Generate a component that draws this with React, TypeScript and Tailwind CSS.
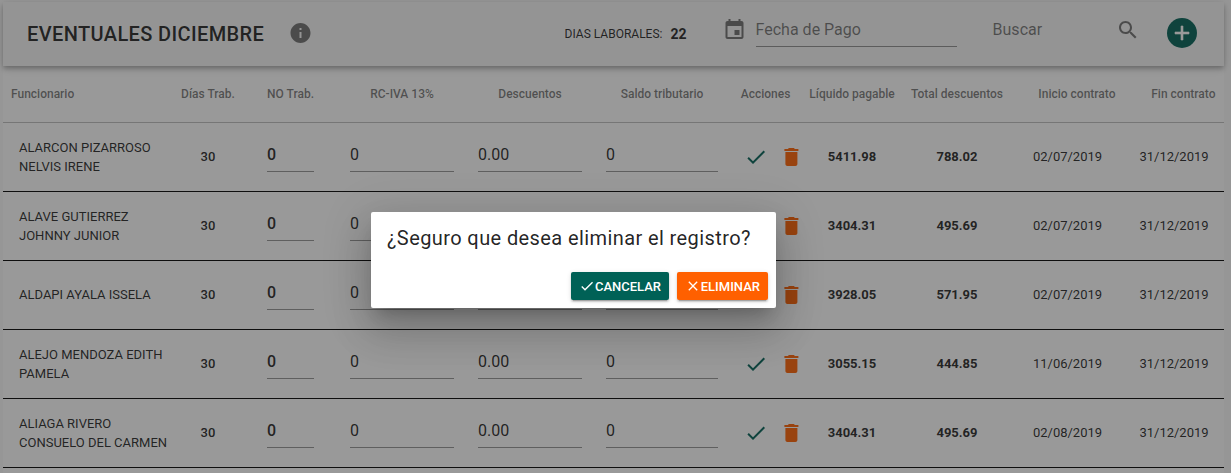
import React from "react";

const PATHS = {
  info: "M12 2C6.48 2 2 6.48 2 12s4.48 10 10 10 10-4.48 10-10S17.52 2 12 2zm1 15h-2v-6h2v6zm0-8h-2V7h2v2z",
  event: "M17 12h-5v5h5v-5zM16 1v2H8V1H6v2H5c-1.11 0-1.99.9-1.99 2L3 19c0 1.1.89 2 2 2h14c1.1 0 2-.9 2-2V5c0-1.1-.9-2-2-2h-1V1h-2zm3 18H5V8h14v11z",
  search:
    "M15.5 14h-.79l-.28-.27C15.41 12.59 16 11.11 16 9.5 16 5.91 13.09 3 9.5 3S3 5.91 3 9.5 5.91 16 9.5 16c1.61 0 3.09-.59 4.23-1.57l.27.28v.79l5 4.99L20.49 19l-4.99-5zm-6 0C7.01 14 5 11.99 5 9.5S7.01 5 9.5 5 14 7.01 14 9.5 11.99 14 9.5 14z",
  add: "M19 13h-6v6h-2v-6H5v-2h6V5h2v6h6v2z",
  check: "M9 16.2L4.8 12l-1.4 1.4L9 19 21 7l-1.4-1.4L9 16.2z",
  trash: "M6 19c0 1.1.9 2 2 2h8c1.1 0 2-.9 2-2V7H6v12zM19 4h-3.5l-1-1h-5l-1 1H5v2h14V4z",
  close: "M19 6.41L17.59 5 12 10.59 6.41 5 5 6.41 10.59 12 5 17.59 6.41 19 12 13.41 17.59 19 19 17.59 13.41 12z",
};

function Icon({ name, className, viewBox = "0 0 24 24" }: { name: keyof typeof PATHS; className: string; viewBox?: string }) {
  return (
    <svg viewBox={viewBox} fill="currentColor" className={"shrink-0 " + className}>
      <path d={PATHS[name]} />
    </svg>
  );
}

const COLS =
  "grid grid-cols-[170px_70px_95px_128px_128px_136px_71px_102px_108px_113px_100px] items-center";

const ROWS = [
  { name: ["ALARCON PIZARROSO", "NELVIS IRENE"], pay: "5411.98", disc: "788.02", start: "02/07/2019" },
  { name: ["ALAVE GUTIERREZ", "JOHNNY JUNIOR"], pay: "3404.31", disc: "495.69", start: "02/07/2019" },
  { name: ["ALDAPI AYALA ISSELA"], pay: "3928.05", disc: "571.95", start: "02/07/2019" },
  { name: ["ALEJO MENDOZA EDITH", "PAMELA"], pay: "3055.15", disc: "444.85", start: "11/06/2019" },
  { name: ["ALIAGA RIVERO", "CONSUELO DEL CARMEN"], pay: "3404.31", disc: "495.69", start: "02/08/2019" },
];

function Field({ value, bold }: { value: string; bold?: boolean }) {
  return (
    <div className={"mt-[-3px] h-[32px] border-b border-black/42 text-[16px] leading-[30px] " + (bold ? "mx-6 font-medium" : "mx-3")}>
      {value}
    </div>
  );
}

function Toolbar() {
  return (
    <header className="relative z-10 flex h-16 items-center bg-[#f5f5f5] pl-6 shadow-[0_2px_4px_-1px_rgba(0,0,0,0.2),0_4px_5px_0_rgba(0,0,0,0.14),0_1px_10px_0_rgba(0,0,0,0.12)]">
      <h1 className="w-[261px] text-[20px] font-medium tracking-[0.38px]">EVENTUALES DICIEMBRE</h1>
      <Icon name="info" viewBox="-0.5 0 24 24" className="-mt-0.5 h-6 w-6 text-black/54" />
      <div className="ml-[252.6px] flex w-[158.9px] items-center">
        <span className="w-[105.8px] text-[12px]">DIAS LABORALES:</span>
        <span className="text-[14px] font-bold">22</span>
      </div>
      <Icon name="event" viewBox="-0.5 0 24 24" className="-mt-2 -ml-[1.5px] h-6 w-6 text-black/54" />
      <div className="-mt-[7px] ml-[9.6px] h-[32px] w-[201px] border-b border-black/42 pt-px text-[16px] leading-[28px] text-black/54">
        Fecha de Pago
      </div>
      <div className="-mt-[8px] ml-9 w-[123.4px] text-[16px] text-black/54">Buscar</div>
      <Icon name="search" className="-mt-2 h-6 w-6 text-black/54" />
      <button className="-mt-0.5 ml-[27px] flex h-[30px] w-[30px] items-center justify-center rounded-full bg-[#006156] text-white">
        <Icon name="add" className="h-6 w-6 stroke-current stroke-[0.6]" />
      </button>
    </header>
  );
}

export default function App() {
  return (
    <div className="relative h-[473px] w-full overflow-hidden bg-[#fafafa] pt-0.5 pr-[7px] pl-[3px] font-[Roboto,sans-serif] text-black/87">
      <Toolbar />
      <main className="h-[420px] bg-white">
        <div className={COLS + " h-[57px] border-b border-black/25 text-center text-[12px] font-medium text-black/54"}>
          <span className="pl-2 text-left">Funcionario</span>
          <span>Días Trab.</span>
          <span>NO Trab.</span>
          <span>RC-IVA 13%</span>
          <span>Descuentos</span>
          <span>Saldo tributario</span>
          <span>Acciones</span>
          <span>Líquido pagable</span>
          <span>Total descuentos</span>
          <span className="pr-[8.5px] text-right">Inicio contrato</span>
          <span className="pr-[8.5px] text-right">Fin contrato</span>
        </div>
        {ROWS.map((row) => (
          <div key={row.name[0]} className={COLS + " h-[69px] border-b border-black text-[13px]"}>
            <div className={"pl-4 leading-[19px] whitespace-nowrap " + (row.name.length === 1 ? "pb-px" : "")}>
              {row.name.map((line) => (
                <div key={line}>{line}</div>
              ))}
            </div>
            <span className="text-center font-medium">30</span>
            <Field value="0" bold />
            <Field value="0" />
            <Field value="0.00" />
            <Field value="0" />
            <div className="flex gap-[11px] pl-[14px]">
              <Icon name="check" className="h-6 w-6 text-[#006156]" />
              <Icon name="trash" viewBox="-0.4 0 24 24" className="h-6 w-6 text-[#ff6000]" />
            </div>
            <span className="text-center font-bold">{row.pay}</span>
            <span className="text-center font-bold">{row.disc}</span>
            <span className="text-center">{row.start}</span>
            <span className="text-center">31/12/2019</span>
          </div>
        ))}
      </main>

      <div className="absolute inset-0 z-20 bg-[#212121]/46" />
      <div
        role="dialog"
        className="absolute top-[212px] left-[371px] z-30 flex h-24 w-[405px] flex-col justify-between rounded-[2px] bg-white p-2 shadow-[0_11px_15px_-7px_rgba(0,0,0,0.2),0_24px_38px_3px_rgba(0,0,0,0.14),0_9px_46px_8px_rgba(0,0,0,0.12)]"
      >
        <h2 className="pt-1 pl-2 text-[20px] leading-[28px] tracking-[0.4px] whitespace-nowrap">
          ¿Seguro que desea eliminar el registro?
        </h2>
        <div className="flex justify-end gap-2 text-[13px] font-medium text-white">
          <button className="flex h-7 w-[98px] items-center justify-end rounded-[2px] bg-[#006156] pr-2 shadow-[0_3px_1px_-2px_rgba(0,0,0,0.2),0_2px_2px_0_rgba(0,0,0,0.14),0_1px_5px_0_rgba(0,0,0,0.12)]">
            <Icon name="check" className="h-4 w-4" />
            <span className="pt-px">CANCELAR</span>
          </button>
          <button className="flex h-7 w-[91px] items-center justify-end rounded-[2px] bg-[#ff6000] pr-2 shadow-[0_3px_1px_-2px_rgba(0,0,0,0.2),0_2px_2px_0_rgba(0,0,0,0.14),0_1px_5px_0_rgba(0,0,0,0.12)]">
            <Icon name="close" className="h-4 w-4" />
            <span className="pt-px">ELIMINAR</span>
          </button>
        </div>
      </div>
    </div>
  );
}
